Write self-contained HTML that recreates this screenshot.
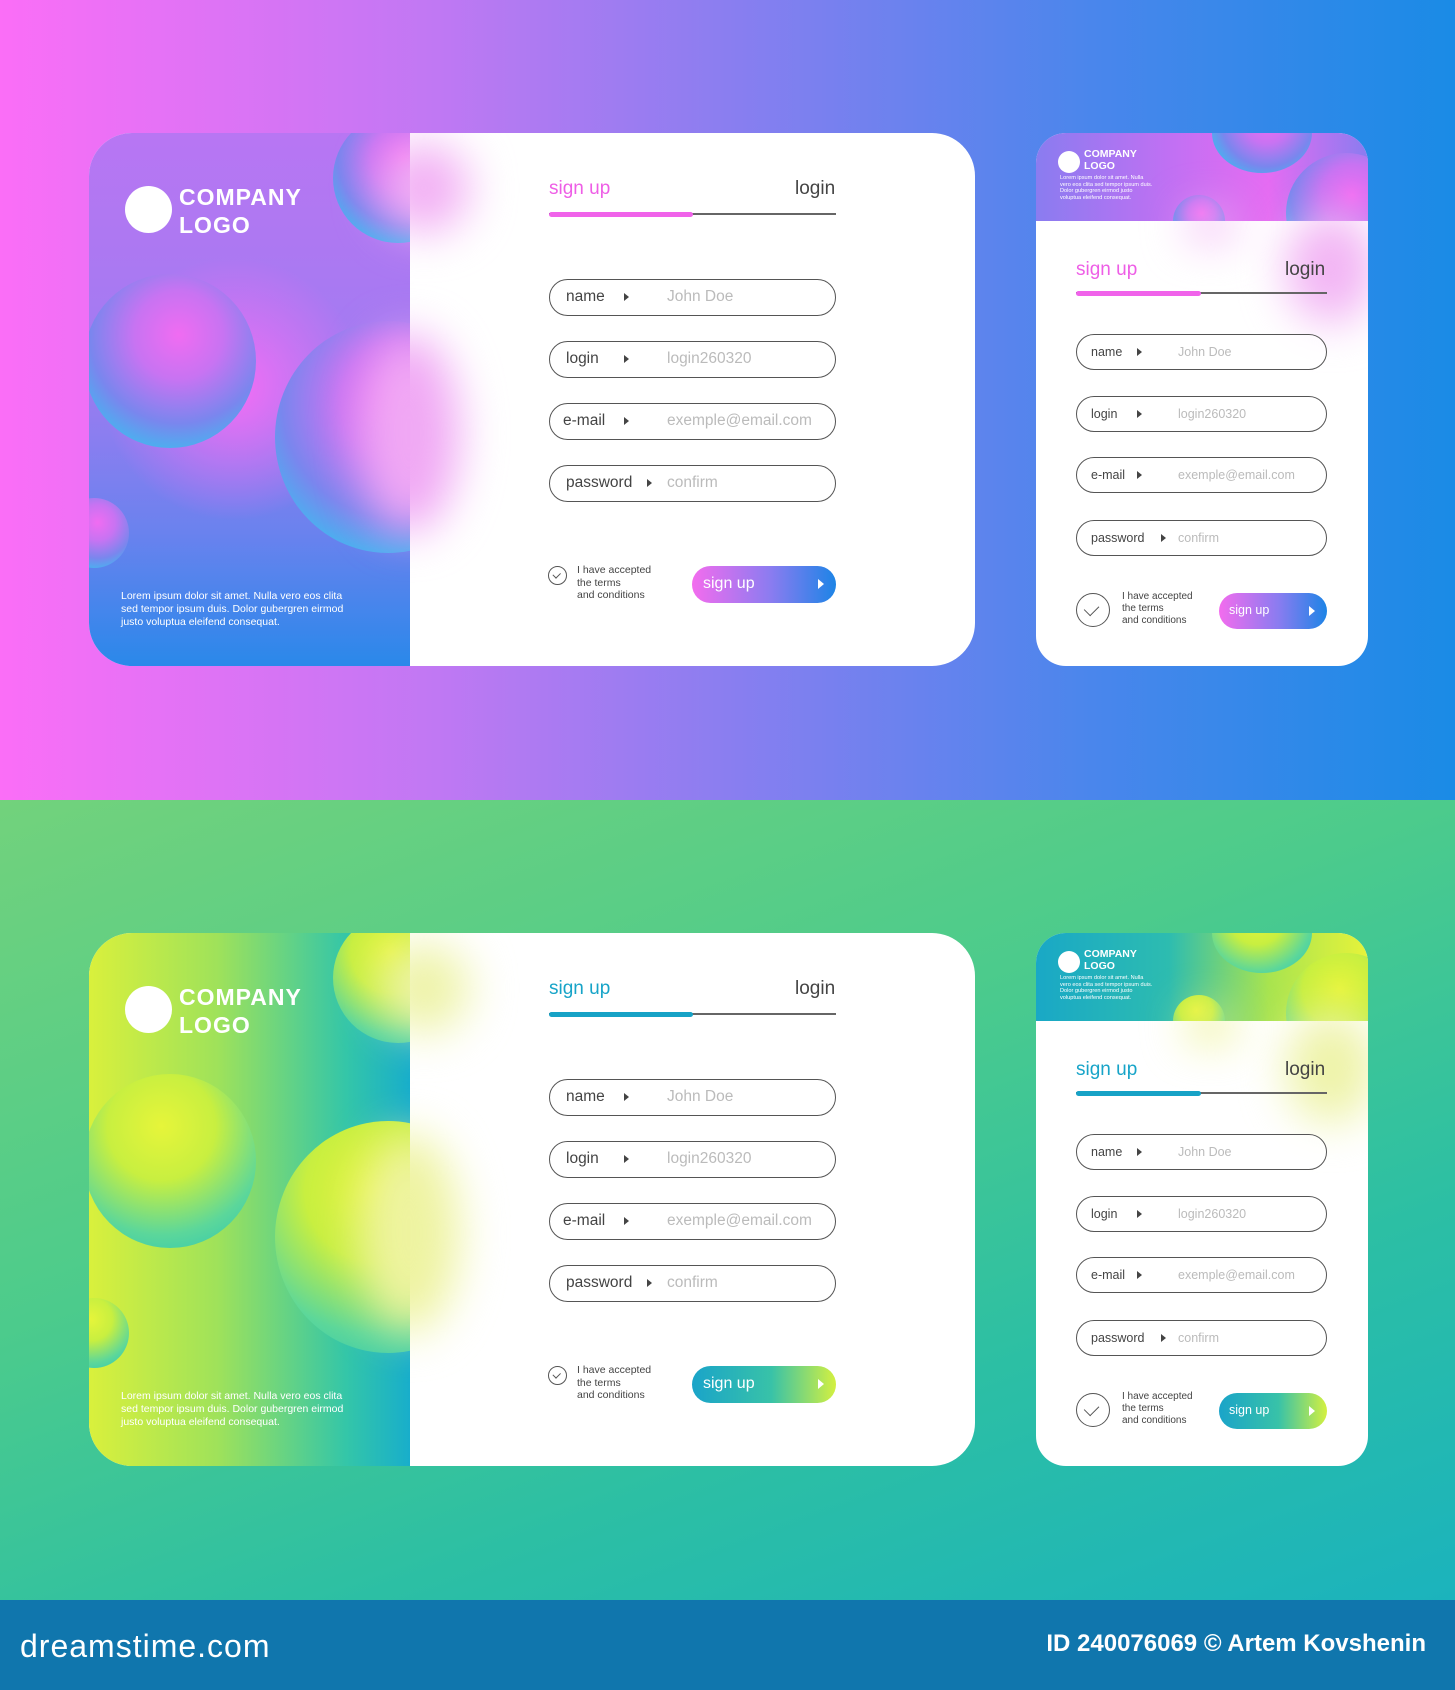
<!DOCTYPE html>
<html><head><meta charset="utf-8"><style>
*{margin:0;padding:0;box-sizing:border-box}
body{width:1455px;height:1690px;position:relative;overflow:hidden;font-family:"Liberation Sans",sans-serif}
.sec{position:absolute;left:0;width:1455px;height:800px;overflow:hidden}
.s1{top:0;background:linear-gradient(90deg,#fb6ef7 0%,#c078f3 30%,#8a7ef0 50%,#4a86ec 75%,#1a8be6 100%)}
.s2{top:800px;background:linear-gradient(160deg,#72d27c 0%,#4ccb8c 40%,#2cbfa4 70%,#1bb3bd 100%)}
.foot{position:absolute;left:0;top:1600px;width:1455px;height:90px;background:#1076ad;color:#fff}
.card{position:absolute;left:89px;top:133px;width:886px;height:533px;border-radius:43px;background:#fff;overflow:hidden}
.lp{position:absolute;left:0;top:0;width:321px;height:533px;overflow:hidden}
.t1 .lp{background:radial-gradient(circle at 45% 48%,#f36ef5 0%,rgba(243,110,245,0) 40%),linear-gradient(180deg,#b876f3 0%,#a07bf1 45%,#6a82ee 75%,#2a88ea 100%)}
.t2 .lp{background:linear-gradient(90deg,#d9f03c 0%,#9fe25a 40%,#34c6a8 80%,#18aecb 100%)}
.b{position:absolute;border-radius:50%}
.t1 .b{background:radial-gradient(circle at 55% 35%,#f06cf2 0%,#c873f2 30%,#7a86ee 60%,#3bbef0 85%,#2cd2f2 100%)}
.t2 .b{background:radial-gradient(circle at 45% 30%,#e6f53a 0%,#c8ef40 35%,#5cd79a 70%,#25c4b8 100%)}
.logo{position:absolute;left:36px;top:53px;width:47px;height:47px;border-radius:50%;background:#fff}
.lt{position:absolute;left:90px;top:50px;color:#fff;font-weight:bold;font-size:23px;line-height:28px;letter-spacing:1px}
.lorem{position:absolute;left:32px;top:457px;color:#fff;font-size:10.5px;line-height:13px}
.glow{position:absolute;border-radius:50%;filter:blur(22px)}
.tab{position:absolute;font-size:19px}
.t1 .on{color:#ee5ee6}.t2 .on{color:#17a4c8}
.off{color:#444}
.ul{position:absolute;height:2px;background:#666}
.ulp{position:absolute;height:5px;border-radius:3px}
.t1 .ulp{background:#f063ea}.t2 .ulp{background:#17a2c6}
.inp{position:absolute;border:1.6px solid #555;border-radius:20px;background:rgba(255,255,255,.6)}
.inp .l{position:absolute;left:16px;top:0;color:#444}
.inp .a{position:absolute;width:0;height:0;border-top:4px solid transparent;border-bottom:4px solid transparent;border-left:5px solid #444}
.inp .p{position:absolute;color:#bbb}
.chk{position:absolute;border:1.3px solid #555;border-radius:50%}
.chk:after{content:"";position:absolute;left:30%;top:24%;width:25%;height:38%;border-right:1.3px solid #555;border-bottom:1.3px solid #555;transform:rotate(45deg)}
.ct{position:absolute;color:#444;line-height:1.2}
.btn{position:absolute;border-radius:20px;color:#fff}
.t1 .btn{background:linear-gradient(90deg,#f36cee,#8a7cf0 55%,#1d84e6)}
.t2 .btn{background:linear-gradient(90deg,#1aa4c9,#38c2a8 55%,#d4f040)}
.btn .a{position:absolute;width:0;height:0;border-top:5px solid transparent;border-bottom:5px solid transparent;border-left:6px solid #fff}
.sc{position:absolute;left:1036px;top:133px;width:332px;height:533px;border-radius:30px;background:#fff;overflow:hidden}
.hd{position:absolute;left:0;top:0;width:332px;height:88px;overflow:hidden}
.t1 .hd{background:linear-gradient(90deg,#8a7cf0 0%,#c070f3 40%,#e56cf2 70%,#8a7cf0 100%)}
.t2 .hd{background:linear-gradient(90deg,#19a8c6 0%,#2dbcb0 40%,#a8e450 70%,#e6f33a 100%)}
</style></head><body>

<div class="sec s1 t1">
 <div class="card">
  <div class="lp">
   <div class="b" style="left:244px;top:-20px;width:130px;height:130px"></div>
   <div class="b" style="left:-5px;top:141px;width:172px;height:174px"></div>
   <div class="b" style="left:186px;top:188px;width:226px;height:232px"></div>
   <div class="b" style="left:-30px;top:365px;width:70px;height:70px"></div>
   <div class="logo"></div>
   <div class="lt">COMPANY<br>LOGO</div>
   <div class="lorem">Lorem ipsum dolor sit amet. Nulla vero eos clita<br>sed tempor ipsum duis. Dolor gubergren eirmod<br>justo voluptua eleifend consequat.</div>
  </div>
  <div class="glow" style="left:290px;top:10px;width:90px;height:90px;background:#f2b0f4"></div>
  <div class="glow" style="left:270px;top:200px;width:100px;height:200px;background:#f0a8f4"></div>
  <div class="tab on" style="left:460px;top:45px">sign up</div>
  <div class="tab off" style="left:706px;top:45px">login</div>
  <div class="ul" style="left:460px;top:80px;width:287px"></div>
  <div class="ulp" style="left:460px;top:79px;width:144px"></div>
  <div class="inp" style="left:460px;top:146px;width:287px;height:37px;font-size:15.5px"><span class="l" style="top:8px">name</span><span class="a" style="left:74px;top:13px"></span><span class="p" style="left:117px;top:8px">John Doe</span></div>
  <div class="inp" style="left:460px;top:208px;width:287px;height:37px;font-size:15.5px"><span class="l" style="top:8px">login</span><span class="a" style="left:74px;top:13px"></span><span class="p" style="left:117px;top:8px">login260320</span></div>
  <div class="inp" style="left:460px;top:270px;width:287px;height:37px;font-size:15.5px"><span class="l" style="top:8px;left:13px">e-mail</span><span class="a" style="left:74px;top:13px"></span><span class="p" style="left:117px;top:8px">exemple@email.com</span></div>
  <div class="inp" style="left:460px;top:332px;width:287px;height:37px;font-size:15.5px"><span class="l" style="top:8px">password</span><span class="a" style="left:97px;top:13px"></span><span class="p" style="left:117px;top:8px">confirm</span></div>
  <div class="chk" style="left:459px;top:433px;width:19px;height:19px"></div>
  <div class="ct" style="left:488px;top:431px;font-size:10.5px">I have accepted<br>the terms<br>and conditions</div>
  <div class="btn" style="left:603px;top:433px;width:144px;height:37px;font-size:16px"><span style="position:absolute;left:11px;top:9px">sign up</span><span class="a" style="left:126px;top:13px"></span></div>
 </div>
 <div class="sc">
  <div class="hd">
   <div class="b" style="left:176px;top:-40px;width:100px;height:80px"></div>
   <div class="b" style="left:250px;top:20px;width:120px;height:120px"></div>
   <div class="b" style="left:137px;top:62px;width:52px;height:52px"></div>
   <div style="position:absolute;left:22px;top:18px;width:22px;height:22px;border-radius:50%;background:#fff"></div>
   <div style="position:absolute;left:48px;top:15px;color:#fff;font-weight:bold;font-size:10.5px;line-height:12px">COMPANY<br>LOGO</div>
   <div style="position:absolute;left:24px;top:42px;color:#fff;font-size:5.6px;line-height:6.6px">Lorem ipsum dolor sit amet. Nulla<br>vero eos clita sed tempor ipsum duis.<br>Dolor gubergren eirmod justo<br>voluptua eleifend consequat.</div>
  </div>
  <div class="glow" style="left:250px;top:80px;width:90px;height:110px;background:#f2b4f4"></div>
  <div class="glow" style="left:150px;top:78px;width:50px;height:30px;background:#f2b4f4"></div>
  <div class="tab on" style="left:40px;top:126px">sign up</div>
  <div class="tab off" style="left:249px;top:126px">login</div>
  <div class="ul" style="left:40px;top:159px;width:251px"></div>
  <div class="ulp" style="left:40px;top:158px;width:125px"></div>
  <div class="inp" style="left:40px;top:201px;width:251px;height:36px;font-size:12.5px"><span class="l" style="top:10px;left:14px">name</span><span class="a" style="left:60px;top:13px"></span><span class="p" style="left:101px;top:10px">John Doe</span></div>
  <div class="inp" style="left:40px;top:263px;width:251px;height:36px;font-size:12.5px"><span class="l" style="top:10px;left:14px">login</span><span class="a" style="left:60px;top:13px"></span><span class="p" style="left:101px;top:10px">login260320</span></div>
  <div class="inp" style="left:40px;top:324px;width:251px;height:36px;font-size:12.5px"><span class="l" style="top:10px;left:14px">e-mail</span><span class="a" style="left:60px;top:13px"></span><span class="p" style="left:101px;top:10px">exemple@email.com</span></div>
  <div class="inp" style="left:40px;top:387px;width:251px;height:36px;font-size:12.5px"><span class="l" style="top:10px;left:14px">password</span><span class="a" style="left:84px;top:13px"></span><span class="p" style="left:101px;top:10px">confirm</span></div>
  <div class="chk" style="left:40px;top:460px;width:34px;height:34px"></div>
  <div class="ct" style="left:86px;top:458px;font-size:10px">I have accepted<br>the terms<br>and conditions</div>
  <div class="btn" style="left:183px;top:460px;width:108px;height:36px;font-size:12.5px"><span style="position:absolute;left:10px;top:10px">sign up</span><span class="a" style="left:90px;top:13px"></span></div>
 </div>
</div>

<div class="sec s2 t2">
 <div class="card">
  <div class="lp">
   <div class="b" style="left:244px;top:-20px;width:130px;height:130px"></div>
   <div class="b" style="left:-5px;top:141px;width:172px;height:174px"></div>
   <div class="b" style="left:186px;top:188px;width:226px;height:232px"></div>
   <div class="b" style="left:-30px;top:365px;width:70px;height:70px"></div>
   <div class="logo"></div>
   <div class="lt">COMPANY<br>LOGO</div>
   <div class="lorem">Lorem ipsum dolor sit amet. Nulla vero eos clita<br>sed tempor ipsum duis. Dolor gubergren eirmod<br>justo voluptua eleifend consequat.</div>
  </div>
  <div class="glow" style="left:290px;top:10px;width:90px;height:90px;background:#eef3a8"></div>
  <div class="glow" style="left:270px;top:200px;width:100px;height:200px;background:#eef3a0"></div>
  <div class="tab on" style="left:460px;top:45px">sign up</div>
  <div class="tab off" style="left:706px;top:45px">login</div>
  <div class="ul" style="left:460px;top:80px;width:287px"></div>
  <div class="ulp" style="left:460px;top:79px;width:144px"></div>
  <div class="inp" style="left:460px;top:146px;width:287px;height:37px;font-size:15.5px"><span class="l" style="top:8px">name</span><span class="a" style="left:74px;top:13px"></span><span class="p" style="left:117px;top:8px">John Doe</span></div>
  <div class="inp" style="left:460px;top:208px;width:287px;height:37px;font-size:15.5px"><span class="l" style="top:8px">login</span><span class="a" style="left:74px;top:13px"></span><span class="p" style="left:117px;top:8px">login260320</span></div>
  <div class="inp" style="left:460px;top:270px;width:287px;height:37px;font-size:15.5px"><span class="l" style="top:8px;left:13px">e-mail</span><span class="a" style="left:74px;top:13px"></span><span class="p" style="left:117px;top:8px">exemple@email.com</span></div>
  <div class="inp" style="left:460px;top:332px;width:287px;height:37px;font-size:15.5px"><span class="l" style="top:8px">password</span><span class="a" style="left:97px;top:13px"></span><span class="p" style="left:117px;top:8px">confirm</span></div>
  <div class="chk" style="left:459px;top:433px;width:19px;height:19px"></div>
  <div class="ct" style="left:488px;top:431px;font-size:10.5px">I have accepted<br>the terms<br>and conditions</div>
  <div class="btn" style="left:603px;top:433px;width:144px;height:37px;font-size:16px"><span style="position:absolute;left:11px;top:9px">sign up</span><span class="a" style="left:126px;top:13px"></span></div>
 </div>
 <div class="sc">
  <div class="hd">
   <div class="b" style="left:176px;top:-40px;width:100px;height:80px"></div>
   <div class="b" style="left:250px;top:20px;width:120px;height:120px"></div>
   <div class="b" style="left:137px;top:62px;width:52px;height:52px"></div>
   <div style="position:absolute;left:22px;top:18px;width:22px;height:22px;border-radius:50%;background:#fff"></div>
   <div style="position:absolute;left:48px;top:15px;color:#fff;font-weight:bold;font-size:10.5px;line-height:12px">COMPANY<br>LOGO</div>
   <div style="position:absolute;left:24px;top:42px;color:#fff;font-size:5.6px;line-height:6.6px">Lorem ipsum dolor sit amet. Nulla<br>vero eos clita sed tempor ipsum duis.<br>Dolor gubergren eirmod justo<br>voluptua eleifend consequat.</div>
  </div>
  <div class="glow" style="left:250px;top:80px;width:90px;height:110px;background:#eef3a8"></div>
  <div class="glow" style="left:150px;top:78px;width:50px;height:30px;background:#eaf080"></div>
  <div class="tab on" style="left:40px;top:126px">sign up</div>
  <div class="tab off" style="left:249px;top:126px">login</div>
  <div class="ul" style="left:40px;top:159px;width:251px"></div>
  <div class="ulp" style="left:40px;top:158px;width:125px"></div>
  <div class="inp" style="left:40px;top:201px;width:251px;height:36px;font-size:12.5px"><span class="l" style="top:10px;left:14px">name</span><span class="a" style="left:60px;top:13px"></span><span class="p" style="left:101px;top:10px">John Doe</span></div>
  <div class="inp" style="left:40px;top:263px;width:251px;height:36px;font-size:12.5px"><span class="l" style="top:10px;left:14px">login</span><span class="a" style="left:60px;top:13px"></span><span class="p" style="left:101px;top:10px">login260320</span></div>
  <div class="inp" style="left:40px;top:324px;width:251px;height:36px;font-size:12.5px"><span class="l" style="top:10px;left:14px">e-mail</span><span class="a" style="left:60px;top:13px"></span><span class="p" style="left:101px;top:10px">exemple@email.com</span></div>
  <div class="inp" style="left:40px;top:387px;width:251px;height:36px;font-size:12.5px"><span class="l" style="top:10px;left:14px">password</span><span class="a" style="left:84px;top:13px"></span><span class="p" style="left:101px;top:10px">confirm</span></div>
  <div class="chk" style="left:40px;top:460px;width:34px;height:34px"></div>
  <div class="ct" style="left:86px;top:458px;font-size:10px">I have accepted<br>the terms<br>and conditions</div>
  <div class="btn" style="left:183px;top:460px;width:108px;height:36px;font-size:12.5px"><span style="position:absolute;left:10px;top:10px">sign up</span><span class="a" style="left:90px;top:13px"></span></div>
 </div>
</div>

<div class="foot">
 <div style="position:absolute;left:20px;top:28px;font-size:32px;letter-spacing:1px">dreamstime.com</div>
 <div style="position:absolute;right:29px;top:30px;font-size:24px;font-weight:bold">ID 240076069 © Artem Kovshenin</div>
</div>
</body></html>
